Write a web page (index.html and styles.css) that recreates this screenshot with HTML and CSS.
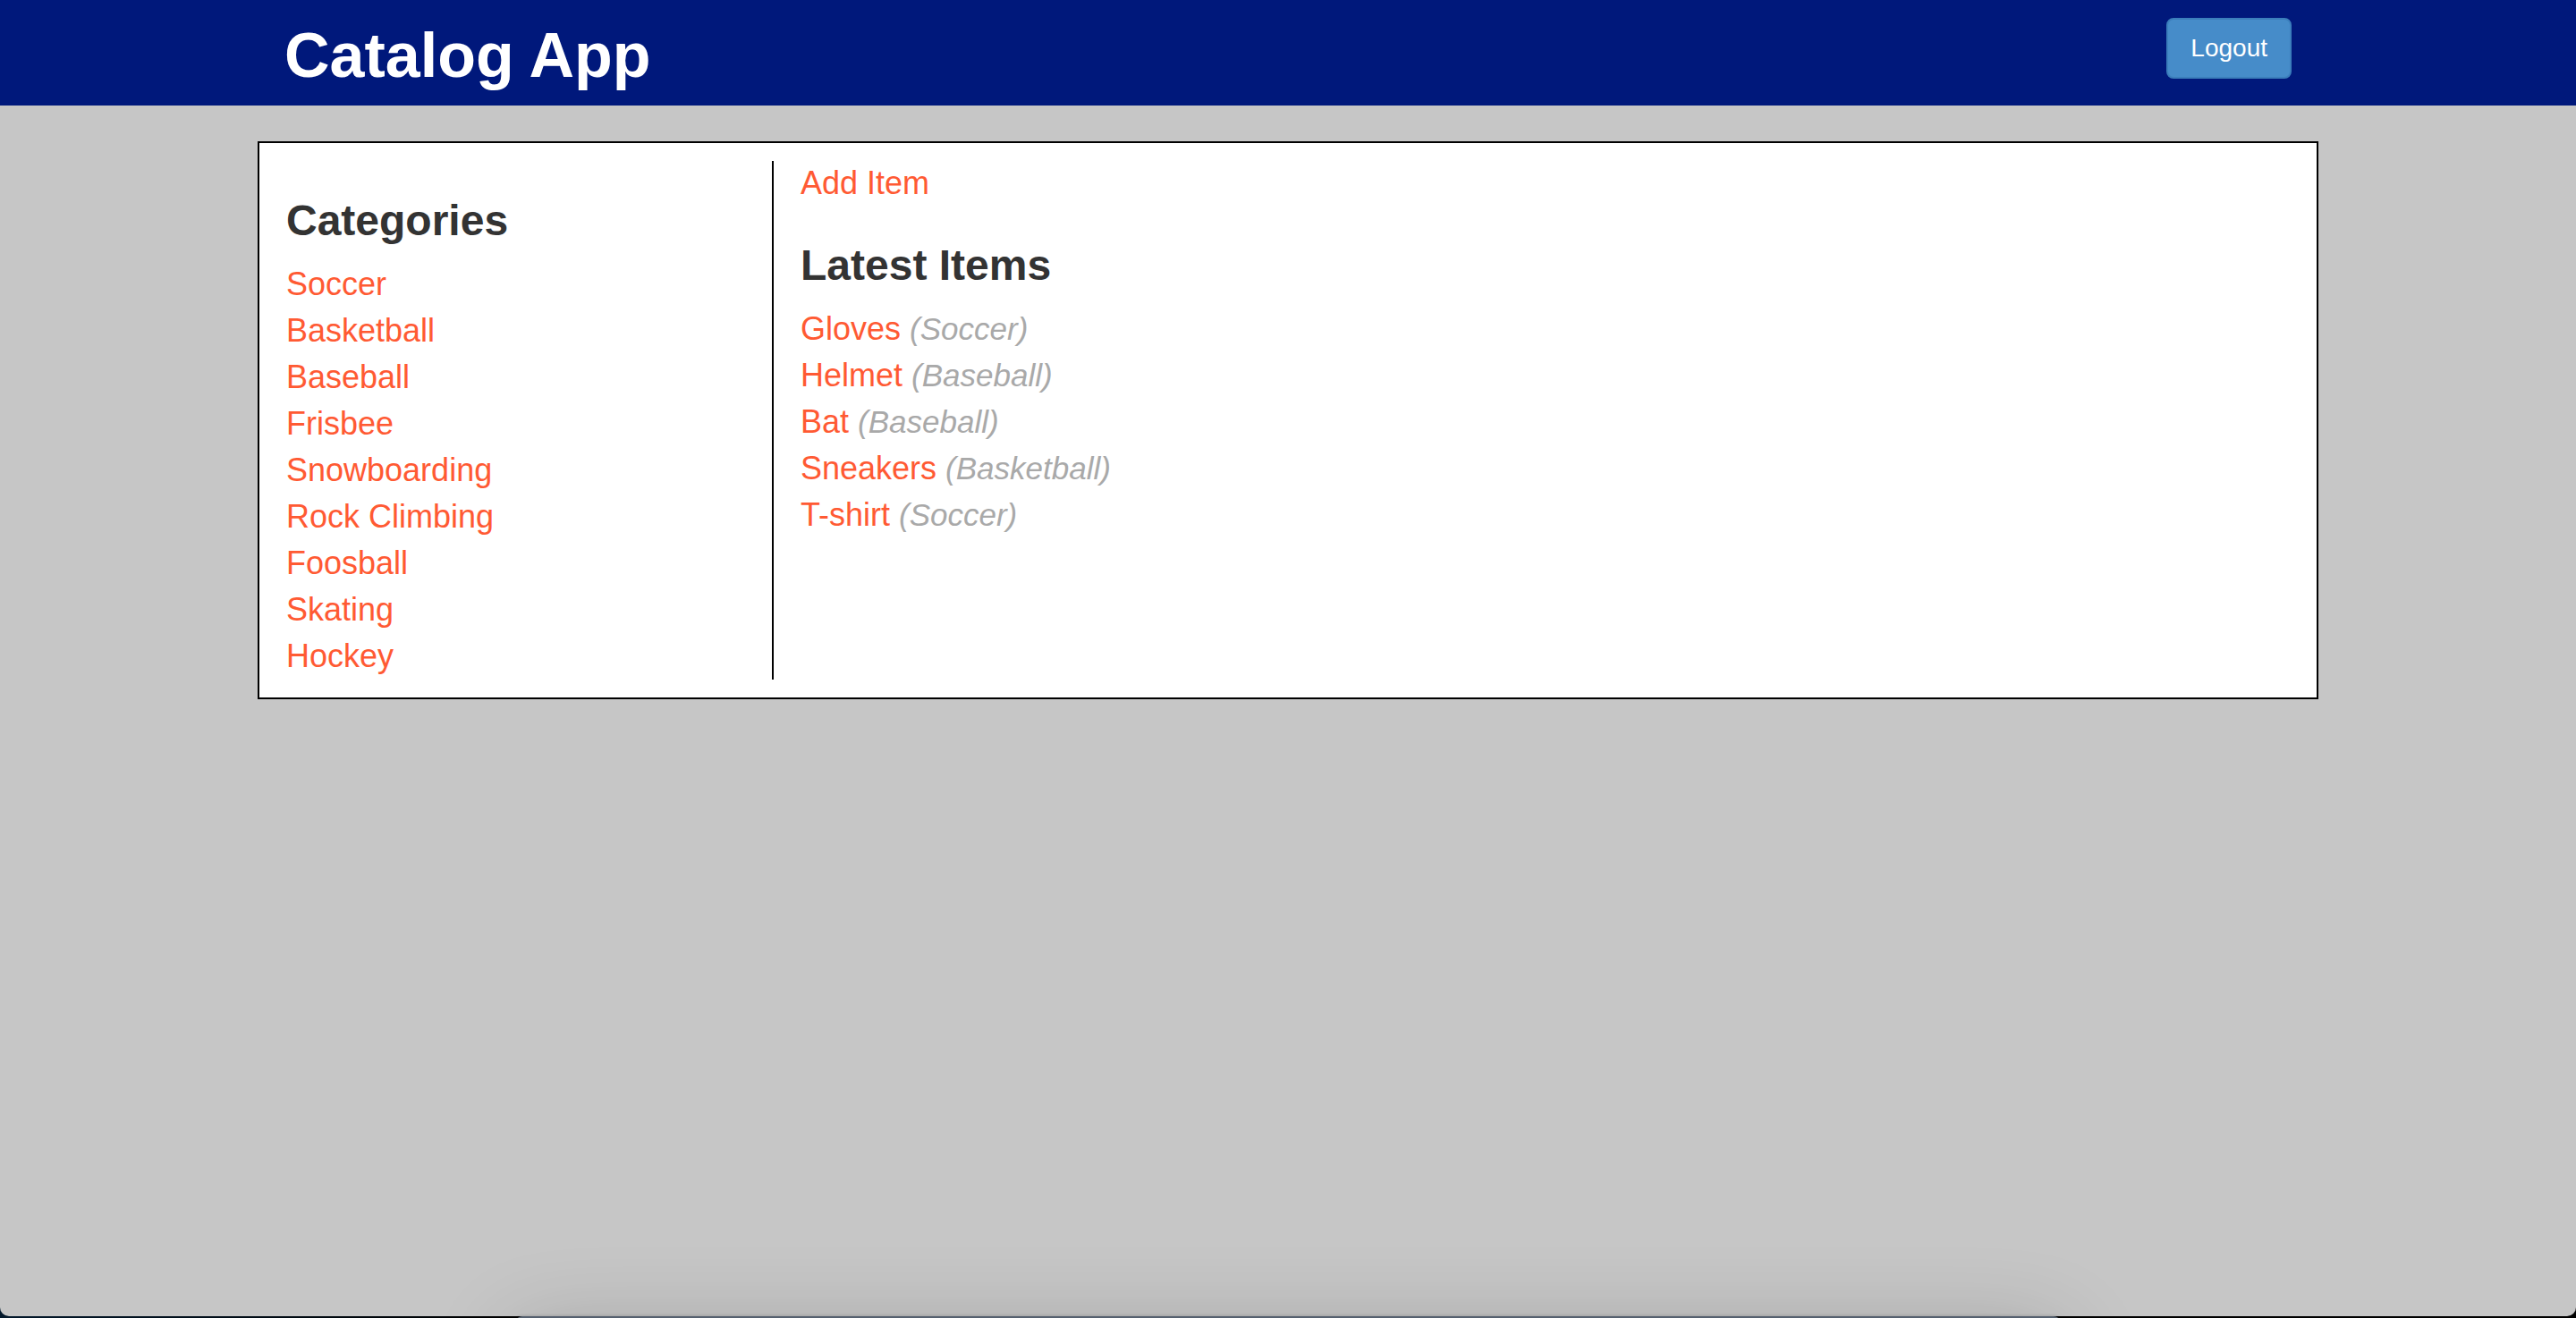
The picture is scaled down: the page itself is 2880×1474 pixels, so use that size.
FILE: index.html
```html
<!DOCTYPE html>
<html lang="en">
<head>
<meta charset="utf-8">
<title>Catalog App</title>
<link rel="stylesheet" href="styles.css">
</head>
<body>
<div class="page">
  <header class="header">
    <div class="header-inner">
      <h1 class="title">Catalog App</h1>
      <button class="btn" type="button">Logout</button>
    </div>
  </header>
  <main class="card">
    <nav class="categories">
      <h3 class="heading">Categories</h3>
      <ul class="list">
        <li><a href="#">Soccer</a></li>
        <li><a href="#">Basketball</a></li>
        <li><a href="#">Baseball</a></li>
        <li><a href="#">Frisbee</a></li>
        <li><a href="#">Snowboarding</a></li>
        <li><a href="#">Rock Climbing</a></li>
        <li><a href="#">Foosball</a></li>
        <li><a href="#">Skating</a></li>
        <li><a href="#">Hockey</a></li>
      </ul>
    </nav>
    <section class="items">
      <a class="add" href="#">Add Item</a>
      <h3 class="heading">Latest Items</h3>
      <ul class="list">
        <li><a href="#">Gloves</a> <em>(Soccer)</em></li>
        <li><a href="#">Helmet</a> <em>(Baseball)</em></li>
        <li><a href="#">Bat</a> <em>(Baseball)</em></li>
        <li><a href="#">Sneakers</a> <em>(Basketball)</em></li>
        <li><a href="#">T-shirt</a> <em>(Soccer)</em></li>
      </ul>
    </section>
  </main>
</div>
<div class="dock-area"><div class="dock"></div></div>
</body>
</html>
```

FILE: styles.css
```css
* {
  box-sizing: border-box;
}

html {
  background: linear-gradient(to right, #03192c, #000 20%);
}

body {
  margin: 0;
  padding-bottom: 2px;
  min-height: 100vh;
  display: flex;
  flex-direction: column;
  font: 36px/52px "Helvetica Neue", "Liberation Sans", Arial, sans-serif;
  color: #333;
}

.page {
  flex: 1;
  background: #c6c6c6;
  border-radius: 0 0 10px 10px;
}

.header {
  background: #00187b;
}

.header-inner {
  width: 80%;
  margin: 0 auto;
  padding: 20px 30px 14px;
  display: flex;
  justify-content: space-between;
  align-items: flex-start;
}

.title {
  margin: 0;
  color: #fff;
  font-size: 70px;
  line-height: 84px;
  font-weight: 700;
}

.btn {
  padding: 12px 25px;
  border: 2px solid #3b7ebb;
  border-radius: 8px;
  background: #468cc9;
  color: #fff;
  font: inherit;
  font-size: 28px;
  line-height: 40px;
}

.card {
  width: 80%;
  margin: 40px auto 0;
  padding: 20px 0;
  display: flex;
  background: #fff;
  border: 2px solid #000;
}

.categories {
  width: 25%;
  padding: 0 30px;
  border-right: 2px solid #000;
}

.items {
  flex: 1;
  padding: 0 30px;
}

.heading {
  margin: 40px 0 18px;
  font-size: 48px;
  line-height: 54px;
}

.add {
  display: block;
  line-height: 50px;
}

.list {
  margin: 0;
  padding: 0;
  list-style: none;
}

a {
  color: #ff5a33;
  text-decoration: none;
}

em {
  color: #a9a9a9;
  font-size: 35px;
  line-height: 50px;
}

/* Bottom edge panel that casts a soft shadow upwards */
.dock-area {
  position: fixed;
  left: 0;
  right: 0;
  bottom: 0;
  height: 140px;
  overflow: hidden;
  pointer-events: none;
}

.dock {
  width: 60%;
  height: 140px;
  margin: 138px auto 0;
  background: #55606f;
  border-radius: 8px;
  box-shadow: 0 20px 100px rgba(0, 0, 0, .2), 0 0 4px rgba(0, 0, 0, .2);
}
```
